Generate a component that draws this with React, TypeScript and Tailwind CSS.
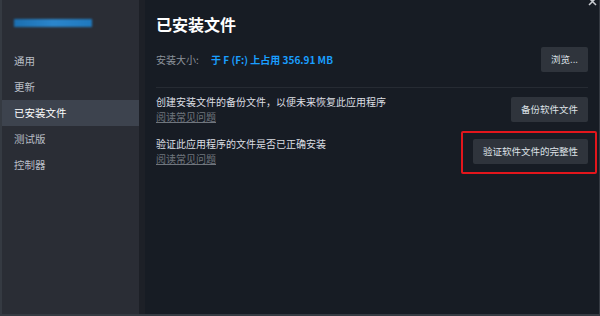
import React from "react";

const font = { fontFamily: '"Noto Sans CJK SC", "Noto Sans", sans-serif' };

function NavItem({ label, active }: { label: string; active?: boolean }) {
  return (
    <div
      className={
        active
          ? "h-[26px] flex items-center pl-[12px] bg-[#3d434e] text-white text-[10.5px]"
          : "h-[26px] flex items-center pl-[12px] text-[#b9bec6] text-[10.5px]"
      }
    >
      {label}
    </div>
  );
}

function Btn({ children }: { children: React.ReactNode }) {
  return (
    <div className="h-[25px] px-[10px] flex items-center rounded-[2px] bg-[#2f343c] text-[#dfe3e8] text-[9.5px] whitespace-nowrap">
      {children}
    </div>
  );
}

export default function App() {
  return (
    <div
      style={font}
      className="w-[600px] h-[316px] flex bg-[#171c24] border-l-2 border-b-2 border-r border-[#353a42] overflow-hidden"
    >
      <div className="w-[137px] shrink-0 bg-[#2a2d35] flex flex-col">
        <div className="mt-[19px] ml-[12px] w-[78px] h-[8px] bg-gradient-to-r from-[#1b6fb0] via-[#2b86cc] to-[#1f79be] blur-[0.8px]" />
        <div className="mt-[21px] flex flex-col">
          <NavItem label="通用" />
          <NavItem label="更新" />
          <NavItem label="已安装文件" active />
          <NavItem label="测试版" />
          <NavItem label="控制器" />
        </div>
      </div>
      <div className="w-[6px] shrink-0 bg-[#1d2027]" />
      <div className="flex-1 relative pl-[11px] pr-[11px] pt-[14px] flex flex-col">
        <svg className="absolute right-[2px] -top-[3px]" width="9" height="9" viewBox="0 0 9 9">
          <path d="M1 1 L8 8 M8 1 L1 8" stroke="#c9ccd1" strokeWidth="1.5" />
        </svg>
        <div className="h-[20px] leading-[20px] text-white text-[16px] font-bold">已安装文件</div>
        <div className="mt-[13px] h-[25px] flex items-center justify-between">
          <div className="flex items-center text-[10px]">
            <span className="text-[#8b929a] w-[55px]">安装大小:</span>
            <span className="text-[#1a9fff] font-semibold">于 F (F:) 上占用 356.91 MB</span>
          </div>
          <Btn>浏览...</Btn>
        </div>
        <div className="mt-[15px] border-t border-[#262b33]" />
        <div className="mt-[7px] flex items-center justify-between">
          <div className="flex flex-col text-[10px] leading-[14.5px]">
            <div className="text-[#dcdfe3]">创建安装文件的备份文件，以便未来恢复此应用程序</div>
            <div className="text-[#6f757d] underline">阅读常见问题</div>
          </div>
          <Btn>备份软件文件</Btn>
        </div>
        <div className="mt-[13px] flex items-center justify-between">
          <div className="flex flex-col text-[10px] leading-[14.5px]">
            <div className="text-[#dcdfe3]">验证此应用程序的文件是否已正确安装</div>
            <div className="text-[#6f757d] underline">阅读常见问题</div>
          </div>
          <div className="relative">
            <Btn>验证软件文件的完整性</Btn>
            <div className="absolute -left-[12px] -right-[9px] -top-[8px] -bottom-[10px] border-2 border-[#e3161c] rounded-[2px]" />
          </div>
        </div>
      </div>
    </div>
  );
}
